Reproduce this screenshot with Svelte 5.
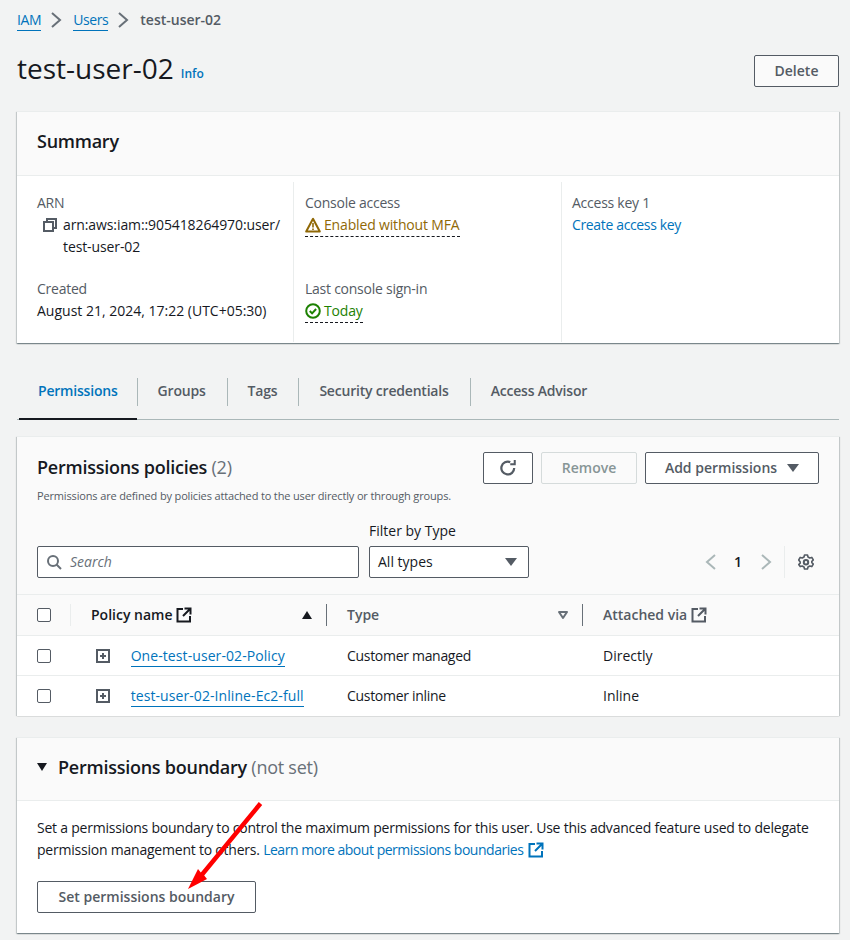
<script>
  const rows = [
    { name: "One-test-user-02-Policy", type: "Customer managed", via: "Directly" },
    { name: "test-user-02-Inline-Ec2-full", type: "Customer inline", via: "Inline" }
  ];
  const tabs = ["Permissions", "Groups", "Tags", "Security credentials", "Access Advisor"];
</script>

{#snippet extLink()}
  <svg class="ext" viewBox="0 0 16 16" width="16" height="16" fill="none" stroke="currentColor" stroke-width="2">
    <path d="M7 2H1.500v12.500H14V9" />
    <path d="M8.500 1.500h6v6M14.500 1.500 7 9" />
  </svg>
{/snippet}

<div class="page">
  <nav class="crumbs">
    <a href="#iam">IAM</a>
    <svg class="sep" viewBox="0 0 16 16" width="16" height="16" fill="none" stroke="#687078" stroke-width="2"><path d="m4 1 8 7-8 7" /></svg>
    <a href="#users">Users</a>
    <svg class="sep" viewBox="0 0 16 16" width="16" height="16" fill="none" stroke="#687078" stroke-width="2"><path d="m4 1 8 7-8 7" /></svg>
    <span class="current">test-user-02</span>
  </nav>

  <header class="title-row">
    <h1>test-user-02</h1>
    <a class="info" href="#info">Info</a>
    <button class="btn delete">Delete</button>
  </header>

  <section class="card summary">
    <div class="card-head"><h2>Summary</h2></div>
    <div class="cols">
      <div class="col first">
        <div class="field">
          <div class="label">ARN</div>
          <div class="arn">
            <svg class="copy" viewBox="0 0 16 16" width="16" height="16" fill="none" stroke="#545b64" stroke-width="2">
              <path d="M5 5V2h9v9h-3" />
              <rect x="2" y="5" width="9" height="9" />
            </svg>
            <span>arn:aws:iam::905418264970:user/<br />test-user-02</span>
          </div>
        </div>
        <div class="field created">
          <div class="label">Created</div>
          <div>August 21, 2024, 17:22 (UTC+05:30)</div>
        </div>
      </div>
      <div class="col">
        <div class="field">
          <div class="label">Console access</div>
          <div class="status warn">
            <svg viewBox="0 0 16 16" width="16" height="16" fill="none" stroke="#906806" stroke-width="2">
              <path d="M8 1.800 1.200 14.500h13.600z" stroke-linejoin="round" />
              <path d="M8 6v4.500M8 11.500v1.500" stroke-width="1.600" />
            </svg>
            <span>Enabled without MFA</span>
          </div>
        </div>
        <div class="field signin">
          <div class="label">Last console sign-in</div>
          <div class="status ok">
            <svg viewBox="0 0 16 16" width="16" height="16" fill="none" stroke="#1d8102" stroke-width="2">
              <circle cx="8" cy="8" r="6.800" />
              <path d="m4.800 8 2.300 2.400 4-4.400" />
            </svg>
            <span>Today</span>
          </div>
        </div>
      </div>
      <div class="col last">
        <div class="field">
          <div class="label">Access key 1</div>
          <a class="create" href="#key">Create access key</a>
        </div>
      </div>
    </div>
  </section>

  <div class="tabs">
    {#each tabs as tab, i}
      <div class="tab" class:active={i === 0}>{tab}</div>
    {/each}
  </div>

  <section class="card policies">
    <div class="pol-head">
      <div class="pol-title">
        <h2>Permissions policies <span class="count">(2)</span></h2>
        <p>Permissions are defined by policies attached to the user directly or through groups.</p>
      </div>
      <div class="pol-actions">
        <button class="btn refresh" aria-label="Refresh">
          <svg viewBox="0 0 16 16" width="18" height="18" fill="none" stroke="#545b64" stroke-width="2">
            <path d="M13.500 8A5.700 5.700 0 1 1 10 2.800" />
            <path d="M14 .8V4.600h-4" stroke-width="1.800" />
          </svg>
        </button>
        <button class="btn disabled">Remove</button>
        <button class="btn add">Add permissions <span class="caret"></span></button>
      </div>
    </div>

    <div class="filters">
      <div class="search">
        <svg viewBox="0 0 16 16" width="16" height="16" fill="none" stroke="#687078" stroke-width="2">
          <circle cx="7" cy="7" r="5" />
          <path d="m10.500 10.500 4.500 4.500" />
        </svg>
        <span>Search</span>
      </div>
      <div class="type-filter">
        <div class="filter-label">Filter by Type</div>
        <div class="select">All types <span class="caret"></span></div>
      </div>
      <div class="pager">
        <svg viewBox="0 0 16 16" width="16" height="16" fill="none" stroke="#aab7b8" stroke-width="2"><path d="m12 1-8 7 8 7" /></svg>
        <b>1</b>
        <svg viewBox="0 0 16 16" width="16" height="16" fill="none" stroke="#aab7b8" stroke-width="2"><path d="m4 1 8 7-8 7" /></svg>
        <i class="divider"></i>
        <svg viewBox="0 0 16 16" width="16" height="16" fill="none" stroke="#545b64" stroke-width="2">
          <path d="M6.500 1h3l.5 2 1.800 1 2-.6 1.500 2.600-1.500 1.400v1.200l1.500 1.400-1.500 2.600-2-.6-1.800 1-.5 2h-3l-.5-2-1.800-1-2 .6L.7 10.600 2.200 9.200V8L.7 6 2.200 3.400l2 .6 1.800-1z" stroke-width="1.600" stroke-linejoin="round" />
          <circle cx="8" cy="8.200" r="2.200" />
        </svg>
      </div>
    </div>

    <table>
      <thead>
        <tr>
          <th class="check"><span class="box"></span><i class="th-line light"></i></th>
          <th class="name">
            <span class="th-text dark">Policy name {@render extLink()}</span>
            <span class="sort-up"></span><i class="th-line"></i>
          </th>
          <th class="type">
            <span class="th-text">Type</span>
            <svg class="sort-down" viewBox="0 0 12 10" width="12" height="10" fill="none" stroke="#687078" stroke-width="2" stroke-linejoin="round"><path d="M2 2h8L6 8z" /></svg>
            <i class="th-line"></i>
          </th>
          <th class="via"><span class="th-text">Attached via {@render extLink()}</span></th>
        </tr>
      </thead>
      <tbody>
        {#each rows as row}
          <tr>
            <td class="check"><span class="box"></span></td>
            <td class="name">
              <svg class="expand" viewBox="0 0 14 14" width="14" height="14">
                <rect x="1" y="1" width="12" height="12" fill="none" stroke="#545b64" stroke-width="2" />
                <path d="M7 4v6M4 7h6" stroke="#545b64" stroke-width="2" />
              </svg>
              <a href="#policy">{row.name}</a>
            </td>
            <td class="kind">{row.type}</td>
            <td>{row.via}</td>
          </tr>
        {/each}
      </tbody>
    </table>
  </section>

  <section class="card boundary">
    <div class="bound-head">
      <span class="tri"></span>
      <h2>Permissions boundary <span class="count">(not set)</span></h2>
    </div>
    <div class="bound-body">
      <p>
        Set a permissions boundary to control the maximum permissions for this user. Use this advanced feature used to delegate<br />
        permission management to others.
        <a class="learn" href="#learn">Learn more about permissions boundaries {@render extLink()}</a>
      </p>
      <button class="btn">Set permissions boundary</button>
    </div>
    <svg class="arrow" viewBox="0 0 100 100" width="100" height="100" fill="#f00">
      <path d="M71.800 5 75.200 8 17.200 78.400 20 82 1 92 11 72 13.800 75.600z" />
    </svg>
  </section>
</div>

<style>
  :global(body) {
    margin: 0;
    background: #f2f3f3;
  }

  .page {
    box-sizing: border-box;
    width: 850px;
    height: 940px;
    overflow: hidden;
    padding: 0 11px 0 17px;
    font-family: "Open Sans", "Noto Sans", sans-serif;
    font-size: 14px;
    line-height: 22px;
    color: #16191f;
  }

  a {
    color: #0073bb;
    text-decoration: none;
  }

  .crumbs {
    display: flex;
    align-items: center;
    height: 22px;
    padding-top: 9px;
  }

  .crumbs a {
    border-bottom: 1px solid #0073bb;
    line-height: 20px;
    margin-top: 1px;
    letter-spacing: -0.4px;
  }

  .sep {
    margin: 0 9px 0 7px;
  }

  .current {
    color: #545b64;
    font-weight: 600;
  }

  .title-row {
    display: flex;
    align-items: flex-start;
    height: 37px;
    margin-top: 19px;
  }

  h1 {
    margin: 0;
    font-size: 28px;
    font-weight: 400;
    line-height: 36px;
  }

  .info {
    font-size: 12px;
    font-weight: 600;
    margin: 13px 0 0 7px;
  }

  .btn {
    box-sizing: border-box;
    height: 32px;
    padding: 0 20px;
    border: 1px solid #545b64;
    border-radius: 2px;
    background: #fff;
    color: #545b64;
    font: 600 14px/22px "Open Sans", "Noto Sans", sans-serif;
  }

  .delete {
    margin: 5px 0 0 auto;
    width: 85px;
    padding: 0;
    background: #fafafa;
  }

  .card {
    background: #fff;
    box-shadow: 0 1px 1px 0 rgba(0, 28, 36, 0.3), 1px 1px 1px 0 rgba(0, 28, 36, 0.15), -1px 1px 1px 0 rgba(0, 28, 36, 0.15);
    border-top: 1px solid #eaeded;
  }

  h2 {
    margin: 0;
    font-size: 18px;
    font-weight: 600;
    line-height: 24px;
    letter-spacing: -0.25px;
  }

  .count {
    color: #687078;
    font-weight: 400;
  }

  .summary {
    margin-top: 24px;
    height: 232px;
    box-sizing: border-box;
  }

  .card-head {
    height: 64px;
    box-sizing: border-box;
    padding: 17px 20px 0;
    background: #fafafa;
    border-bottom: 1px solid #eaeded;
  }

  .cols {
    display: grid;
    grid-template-columns: 276px 268px 1fr;
    padding-top: 6px;
  }

  .col {
    height: 150px;
    padding: 10px 0 0 11px;
    border-left: 1px solid #eaeded;
  }

  .col.first {
    border-left: 0;
    padding-left: 20px;
  }

  .col.last {
    padding-left: 10px;
  }

  .label {
    color: #545b64;
    letter-spacing: -0.25px;
  }

  .arn {
    display: flex;
    gap: 5px;
    padding-left: 5px;
    white-space: nowrap;
    letter-spacing: -0.1px;
  }

  .copy {
    margin-top: 3px;
  }

  .created {
    margin-top: 20px;
  }

  .signin {
    margin-top: 39px;
  }

  .status {
    display: inline-flex;
    align-items: center;
    gap: 3px;
    border-bottom: 1px dashed #16191f;
    height: 22px;
    letter-spacing: -0.16px;
  }

  .warn span {
    color: #906806;
  }

  .ok span {
    color: #1d8102;
  }

  .create {
    letter-spacing: -0.35px;
  }

  .tabs {
    display: flex;
    align-items: stretch;
    height: 47px;
    margin-top: 30px;
    padding-left: 2px;
    border-bottom: 1px solid #aab7b8;
    box-sizing: border-box;
  }

  .tab {
    position: relative;
    padding: 0 21px 10px;
    height: 46px;
    box-sizing: border-box;
    display: flex;
    align-items: center;
    font-weight: 600;
    color: #545b64;
    letter-spacing: -0.2px;
  }

  .tab + .tab::before {
    content: "";
    position: absolute;
    left: 0;
    top: 5px;
    height: 28px;
    border-left: 1px solid #aab7b8;
  }

  .tab.active {
    color: #0073bb;
    padding-left: 19px;
    padding-right: 19px;
    border-bottom: 2px solid #16191f;
    height: 47px;
  }

  .policies {
    margin-top: 16px;
    background: #fafafa;
    height: 279px;
    box-sizing: border-box;
  }

  .pol-head {
    display: flex;
    justify-content: space-between;
    padding: 15px 20px 0;
  }

  .pol-title h2 {
    margin-top: 3px;
  }

  .pol-title p {
    margin: 8px 0 0;
    font-size: 11px;
    line-height: 18px;
    color: #545b64;
    letter-spacing: -0.15px;
  }

  .pol-actions {
    display: flex;
    gap: 8px;
  }

  .refresh {
    width: 50px;
    padding: 0;
    display: flex;
    align-items: center;
    justify-content: center;
  }

  .disabled {
    width: 96px;
    padding: 0;
    border-color: #d5dbdb;
    color: #879596;
    background: #fafafa;
  }

  .add {
    width: 174px;
    padding: 0;
    display: flex;
    align-items: center;
    justify-content: center;
    gap: 10px;
  }

  .caret {
    display: inline-block;
    width: 0;
    height: 0;
    border-left: 6px solid transparent;
    border-right: 6px solid transparent;
    border-top: 8px solid #545b64;
  }

  .filters {
    display: flex;
    align-items: flex-end;
    padding: 0 20px;
    margin-top: 19px;
    height: 54px;
  }

  .search {
    box-sizing: border-box;
    width: 322px;
    height: 32px;
    display: flex;
    align-items: center;
    gap: 8px;
    padding-left: 8px;
    background: #fff;
    border: 1px solid #545b64;
    border-radius: 2px;
    color: #687078;
    font-style: italic;
  }

  .type-filter {
    margin-left: 10px;
    width: 160px;
  }

  .filter-label {
    margin-bottom: 4px;
  }

  .select {
    box-sizing: border-box;
    height: 32px;
    display: flex;
    align-items: center;
    justify-content: space-between;
    padding: 0 11px 0 8px;
    background: #fff;
    border: 1px solid #545b64;
    border-radius: 2px;
  }

  .pager {
    margin-left: auto;
    margin-right: 5px;
    height: 32px;
    display: flex;
    align-items: center;
  }

  .pager b {
    font-weight: 600;
    margin: 0 16px 0 15px;
  }

  .divider {
    height: 32px;
    border-left: 1px solid #eaeded;
    margin: 0 13px 0 10px;
  }

  table {
    width: 100%;
    margin-top: 16px;
    border-collapse: collapse;
    table-layout: fixed;
    background: #fff;
  }

  thead tr {
    background: #fafafa;
    height: 41px;
  }

  th {
    position: relative;
    padding: 0;
    text-align: left;
    font-weight: 600;
    color: #545b64;
    border-top: 1px solid #eaeded;
    border-bottom: 1px solid #eaeded;
  }

  th.check {
    width: 74px;
  }

  th.name {
    width: 236px;
  }

  th.type {
    width: 236px;
  }

  .th-text {
    display: inline-flex;
    align-items: center;
    gap: 3px;
  }

  .dark {
    color: #16191f;
  }

  th.type,
  th.via {
    padding-left: 20px;
  }

  .ext {
    vertical-align: -3px;
    margin-left: 1px;
  }

  .box {
    display: block;
    box-sizing: border-box;
    width: 14px;
    height: 14px;
    margin-left: 20px;
    background: #fff;
    border: 1px solid #545b64;
    border-radius: 2px;
  }

  .th-line {
    position: absolute;
    right: 0;
    top: 9px;
    height: 22px;
    border-right: 1px solid #687078;
  }

  .th-line.light {
    border-color: #eaeded;
    right: 20px;
  }

  .sort-up,
  .sort-down {
    position: absolute;
    right: 15px;
    top: 16px;
  }

  .sort-up {
    width: 0;
    height: 0;
    border-left: 5px solid transparent;
    border-right: 5px solid transparent;
    border-bottom: 8px solid #16191f;
  }

  .sort-down {
    right: 14px;
    top: 15px;
  }

  tbody tr {
    height: 40px;
    border-bottom: 1px solid #eaeded;
  }

  tbody tr:last-child {
    border-bottom: 0;
  }

  td {
    padding: 0 0 0 20px;
  }

  td.kind {
    letter-spacing: -0.3px;
  }

  td.check,
  td.name {
    padding: 0;
    white-space: nowrap;
  }

  .expand {
    margin: 0 17px 0 5px;
    vertical-align: -2px;
  }

  td a {
    border-bottom: 1px solid #0073bb;
    padding-bottom: 1px;
    letter-spacing: 0.08px;
  }

  .boundary {
    position: relative;
    margin-top: 22px;
    height: 196px;
    box-sizing: border-box;
  }

  .bound-head {
    display: flex;
    align-items: center;
    gap: 11px;
    box-sizing: border-box;
    height: 63px;
    padding: 0 20px 4px;
    background: #fafafa;
    border-bottom: 1px solid #eaeded;
  }

  .tri {
    width: 0;
    height: 0;
    border-left: 5px solid transparent;
    border-right: 5px solid transparent;
    border-top: 8px solid #16191f;
  }

  .bound-body {
    padding: 16px 20px 0;
  }

  .bound-body p {
    margin: 0 0 20px;
    letter-spacing: -0.22px;
  }

  .learn {
    letter-spacing: -0.47px;
  }

  .bound-body .btn {
    display: block;
    width: 219px;
    padding: 0;
  }

  .arrow {
    position: absolute;
    left: 170px;
    top: 59px;
  }
</style>
